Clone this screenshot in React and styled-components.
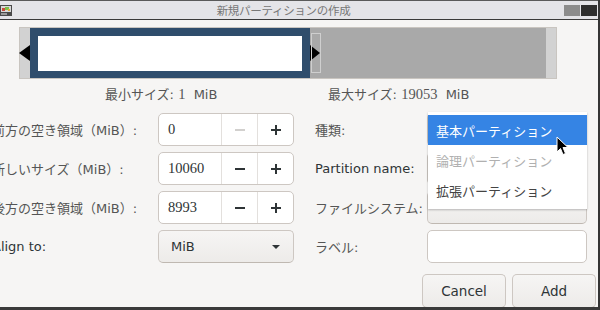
import React from "react";
import styled, { createGlobalStyle } from "styled-components";

const GlobalStyle = createGlobalStyle`
  html, body {
    margin: 0;
    padding: 0;
    background: #f6f5f4;
    overflow: hidden;
  }
`;

const Window = styled.div`
  position: relative;
  width: 600px;
  height: 310px;
  box-sizing: border-box;
  background: #f6f5f4;
  border-right: 2px solid #353535;
  border-bottom: 3px solid #3a3a3a;
  display: flex;
  flex-direction: column;
  font-family: "DejaVu Sans", "Noto Sans CJK JP", sans-serif;
  font-size: 13px;
  color: #2e3436;
  overflow: hidden;
`;

const TitleBar = styled.div`
  height: 20px;
  box-sizing: border-box;
  flex: none;
  border-top: 1px solid #5a5a5a;
  border-bottom: 1px solid #3a3a3a;
  background: #e4e4e8;
  display: flex;
  align-items: center;
`;

const Title = styled.div`
  flex: 1;
  text-align: center;
  padding-right: 12px;
  font-family: "Noto Sans CJK JP", sans-serif;
  font-size: 11.5px;
  color: #777;
  letter-spacing: -0.3px;
`;

const WinButtons = styled.div`
  display: flex;
  gap: 1px;
  padding-right: 1px;
`;

const WinButton = styled.div`
  width: 16px;
  height: 11px;
  background: ${(p) => (p.$dark ? "#2e2e2e" : "#8c8c8c")};
`;

const Body = styled.div`
  flex: 1;
  display: flex;
  flex-direction: column;
  padding-top: 7px;
`;

const Bar = styled.div`
  margin-left: 19px;
  width: 538px;
  height: 52px;
  box-sizing: border-box;
  border: 1px solid #c9c5c0;
  background: #d2d2d2;
  display: flex;
  padding: 0 10px;
`;

const Used = styled.div`
  position: relative;
  width: 280px;
  box-sizing: border-box;
  background: #2f4d6c;
  padding: 8px 8px 7px 8px;
  display: flex;
`;

const UsedFill = styled.div`
  flex: 1;
  background: #ffffff;
`;

const Free = styled.div`
  flex: 1;
  background: #a9a9a9;
`;

const Arrow = styled.div`
  position: absolute;
  top: 17px;
  width: 0;
  height: 0;
  border-top: 8px solid transparent;
  border-bottom: 8px solid transparent;
  ${(p) =>
    p.$side === "left"
      ? "left: -11px; border-right: 11px solid #000;"
      : "right: -10px; border-left: 10px solid #000;"}
`;

const Handle = styled.div`
  position: absolute;
  top: 5px;
  right: -11px;
  width: 10px;
  height: 40px;
  box-sizing: border-box;
  border: 1px solid #cfcfcf;
`;

const SizeInfo = styled.div`
  display: grid;
  grid-template-columns: 223px auto;
  padding-left: 105px;
  margin-top: 7px;
  height: 17px;
  line-height: 17px;
  color: #555;
  white-space: pre;
`;

const Num = styled.span`
  font-family: "Liberation Serif", serif;
  font-size: 14.5px;
`;

const Form = styled.div`
  display: grid;
  grid-template-columns: 166px 136px 133px 160px;
  grid-auto-rows: 33px;
  row-gap: 6px;
  margin-left: -8px;
  margin-top: 10px;
`;

const Label = styled.div`
  display: flex;
  align-items: center;
  white-space: nowrap;
  padding-left: ${(p) => (p.$right ? "21px" : "0")};
  color: ${(p) => (p.$latin ? "#2e3436" : "#555")};
`;

const Spin = styled.div`
  display: flex;
  box-sizing: border-box;
  border: 1px solid #cdc7c2;
  border-radius: 5px;
  background: #fff;
  overflow: hidden;
`;

const SpinValue = styled.div`
  flex: 1;
  display: flex;
  align-items: center;
  padding-left: 9px;
  font-family: "Liberation Serif", serif;
  font-size: 14.5px;
  color: #2e3436;
`;

const SpinBtn = styled.div`
  width: 35px;
  flex: none;
  display: flex;
  align-items: center;
  justify-content: center;
  border-left: 1px solid #e3e0dd;
  color: ${(p) => (p.$disabled ? "#d2d0ce" : "#2e3436")};
`;

const Combo = styled.div`
  display: flex;
  align-items: center;
  justify-content: space-between;
  box-sizing: border-box;
  padding: 0 12px ${(p) => (p.$raised ? "8px" : "0")} 12px;
  border: 1px solid #cdc7c2;
  border-bottom-color: #bfb8b1;
  border-radius: 5px;
  background: linear-gradient(#f6f5f4, #edebe9);
  color: #2e3436;
`;

const Entry = styled.div`
  box-sizing: border-box;
  border: 1px solid #cdc7c2;
  border-radius: 5px;
  background: #fff;
`;

const Actions = styled.div`
  display: flex;
  justify-content: flex-end;
  gap: 6px;
  padding-right: 2px;
  margin-top: 11px;
`;

const Button = styled.div`
  width: 84px;
  height: 34px;
  box-sizing: border-box;
  display: flex;
  align-items: center;
  justify-content: center;
  border: 1px solid #cdc7c2;
  border-bottom-color: #bfb8b1;
  border-radius: 5px;
  background: linear-gradient(#f6f5f4, #edebe9);
  font-size: 13.5px;
  color: #2e3436;
`;

const Popup = styled.div`
  position: absolute;
  left: 428px;
  top: 112px;
  width: 159px;
  height: 97px;
  box-sizing: border-box;
  padding-top: 3px;
  background: #fff;
  box-shadow: 0 1px 2px rgba(0, 0, 0, 0.25);
  font-family: "Noto Sans CJK JP", sans-serif;
`;

const Item = styled.div`
  height: 30px;
  display: flex;
  align-items: center;
  padding-left: 8px;
  background: ${(p) => (p.$active ? "#3584e4" : "transparent")};
  color: ${(p) => (p.$active ? "#fff" : p.$disabled ? "#b0b0b0" : "#444")};
`;

const Cursor = styled.svg`
  position: absolute;
  left: 556px;
  top: 136px;
`;

const Minus = () => (
  <svg width="12" height="12" viewBox="0 0 12 12">
    <rect x="1" y="5" width="10" height="2" fill="currentColor" />
  </svg>
);

const Plus = () => (
  <svg width="12" height="12" viewBox="0 0 12 12">
    <rect x="1" y="5" width="10" height="2" fill="currentColor" />
    <rect x="5" y="1" width="2" height="10" fill="currentColor" />
  </svg>
);

const SpinField = ({ value, minusDisabled }) => (
  <Spin>
    <SpinValue>{value}</SpinValue>
    <SpinBtn $disabled={minusDisabled}>
      <Minus />
    </SpinBtn>
    <SpinBtn>
      <Plus />
    </SpinBtn>
  </Spin>
);

const AppIcon = () => (
  <svg width="13" height="13" viewBox="0 0 13 13" style={{ marginRight: 2 }}>
    <rect x="0" y="1" width="12" height="11" fill="#4a4a4a" />
    <rect x="1" y="2" width="10" height="6" fill="#d8d8d8" />
    <rect x="2" y="4" width="3" height="3" fill="#c84a3a" />
    <rect x="5" y="3" width="4" height="3" fill="#7cbf4a" />
    <rect x="8" y="5" width="2" height="2" fill="#e0b030" />
    <rect x="1" y="9" width="6" height="2" fill="#999" />
  </svg>
);

export default function App() {
  return (
    <>
      <GlobalStyle />
      <Window>
        <TitleBar>
          <AppIcon />
          <Title>新規パーティションの作成</Title>
          <WinButtons>
            <WinButton />
            <WinButton $dark />
          </WinButtons>
        </TitleBar>
        <Body>
          <Bar>
            <Used>
              <UsedFill />
              <Arrow $side="left" />
              <Arrow $side="right" />
              <Handle />
            </Used>
            <Free />
          </Bar>
          <SizeInfo>
            <span>
              最小サイズ: <Num>1</Num>  MiB
            </span>
            <span>
              最大サイズ: <Num>19053</Num>  MiB
            </span>
          </SizeInfo>
          <Form>
            <Label>前方の空き領域（MiB）:</Label>
            <SpinField value="0" minusDisabled />
            <Label $right>種類:</Label>
            <Combo />

            <Label>新しいサイズ（MiB）:</Label>
            <SpinField value="10060" />
            <Label $right $latin>
              Partition name:
            </Label>
            <Entry />

            <Label>後方の空き領域（MiB）:</Label>
            <SpinField value="8993" />
            <Label $right>ファイルシステム:</Label>
            <Combo $raised>ext4</Combo>

            <Label $latin>Align to:</Label>
            <Combo>
              MiB
              <svg width="10" height="6" viewBox="0 0 10 6">
                <path d="M1 1 L9 1 L5 5 Z" fill="#2e3436" />
              </svg>
            </Combo>
            <Label $right>ラベル:</Label>
            <Entry />
          </Form>
          <Actions>
            <Button>Cancel</Button>
            <Button>Add</Button>
          </Actions>
        </Body>
        <Popup>
          <Item $active>基本パーティション</Item>
          <Item $disabled>論理パーティション</Item>
          <Item>拡張パーティション</Item>
        </Popup>
        <Cursor width="14" height="22" viewBox="0 0 14 22">
          <path
            d="M1 1 L1 16 L4.5 12.5 L7 18.5 L9.5 17.5 L7 11.5 L12 11.5 Z"
            fill="#000"
            stroke="#fff"
            strokeWidth="1"
            strokeLinejoin="round"
          />
        </Cursor>
      </Window>
    </>
  );
}
